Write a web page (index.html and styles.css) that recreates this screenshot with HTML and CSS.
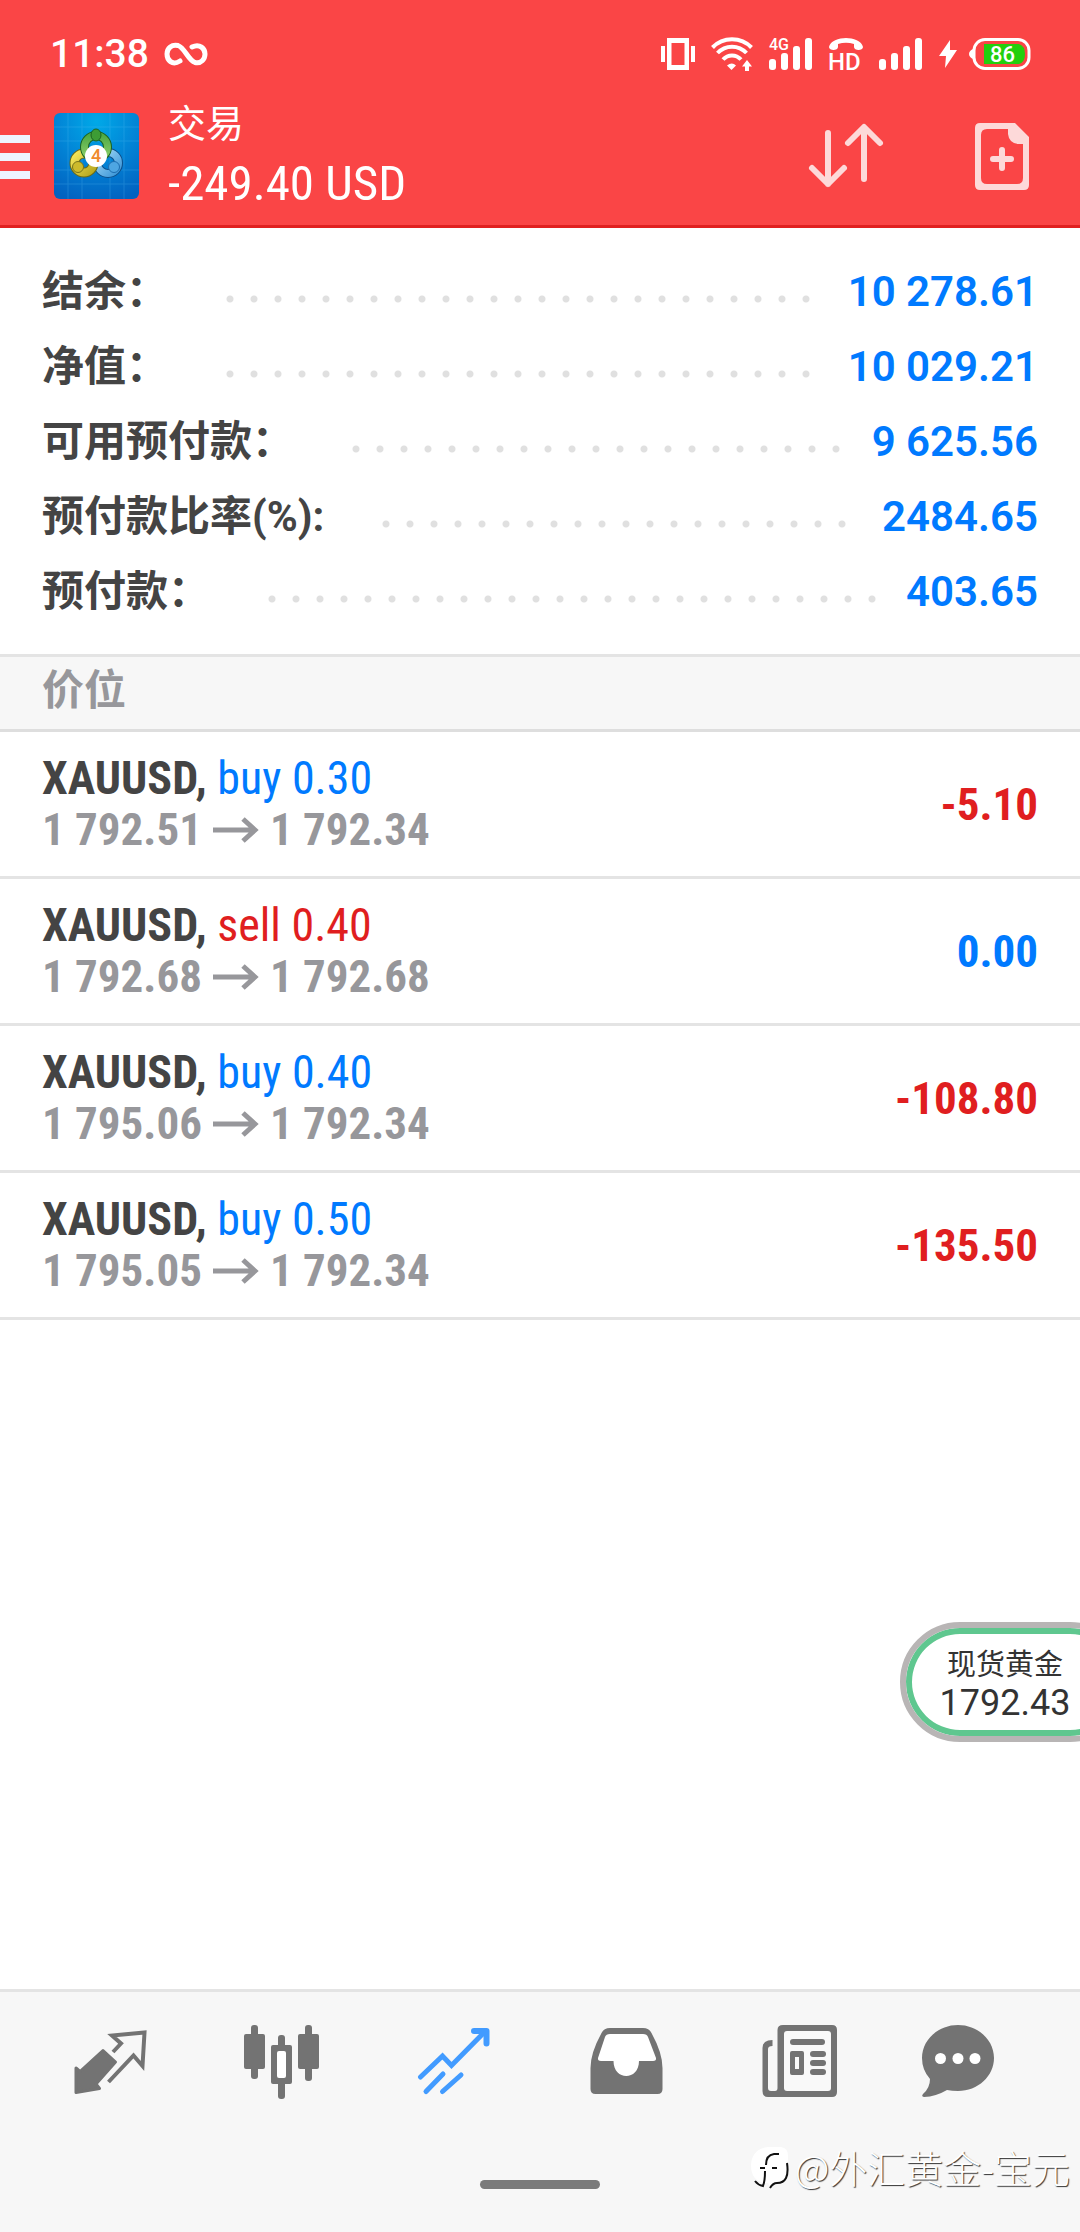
FILE: index.html
```html
<!DOCTYPE html>
<html lang="zh-CN">
<head>
<meta charset="utf-8">
<meta name="viewport" content="width=device-width, initial-scale=1">
<title>交易</title>
<link rel="stylesheet" href="styles.css">
</head>
<body>
<div class="app">
  <header class="top">
    <div class="status">
      <span class="clock">11:38</span>
      <svg class="infinity" width="44" height="24" viewBox="0 0 44 24" fill="none" stroke="#fff" stroke-width="5" stroke-linecap="round"><path d="M16 19C8 24 3 18 3 12S8 2 14 3.500C21 6 24 18 31 20.500C37 22 41 17 41 12S36 1 28 5"/></svg>
      <div class="status-icons">
        <svg width="34" height="32" viewBox="0 0 34 32" fill="#fff"><path d="M6 0h22v32H6zM10.500 5v22h13V5z" fill-rule="evenodd"/><path d="M0 8h4v16H0zM30 8h4v16h-4z"/></svg>
        <svg width="42" height="34" viewBox="0 0 42 34" fill="none" stroke="#fff" stroke-width="4"><path d="M1.500 10.500C12-.5 30-.5 40.500 10.500M6.500 16C14.500 7.500 27.500 7.500 35.500 16M12 22.500c5-5.500 13-5.500 18 0"/><path d="M16 28.500q5-4 9 0L20.500 33z" fill="#fff" stroke="none"/><path d="M31 29.500l5-6.500 5 6.500h-3V34h-4v-4.500z" fill="#fff" stroke="none"/></svg>
        <svg width="44" height="32" viewBox="0 0 44 32" fill="#fff"><rect y="21" width="7" height="11" rx="3"/><rect x="12" y="15" width="7" height="17" rx="3"/><rect x="24" y="8" width="7" height="24" rx="3"/><rect x="36" width="7" height="32" rx="3"/><text class="net" x="0" y="12">4G</text></svg>
        <svg width="34" height="32" viewBox="0 0 34 32" fill="#fff"><path d="M0 9C1 3 10 0 17 0s16 3 17 9c0 4-9 4-9 0V6q-8-2.500-16 0v3c0 4-9 4-9 0z"/><text class="hd" x="-1" y="32">HD</text></svg>
        <svg width="44" height="32" viewBox="0 0 44 32" fill="#fff"><rect y="21" width="7" height="11" rx="3"/><rect x="12" y="15" width="7" height="17" rx="3"/><rect x="24" y="8" width="7" height="24" rx="3"/><rect x="36" width="7" height="32" rx="3"/></svg>
        <div class="power">
          <svg width="18" height="28" viewBox="0 0 18 28" fill="#fff"><path d="M11 0L0 16h7l-1 12L18 10h-7z"/></svg>
          <svg width="62" height="32" viewBox="0 0 62 32"><rect x="5" y="1.500" width="55" height="29" rx="11" fill="none" stroke="#fff" stroke-width="3"/><path d="M4 11v10q-4-2-4-5t4-5z" fill="#fff"/><path d="M15 6h35q6 2 6 10t-6 10H15z" fill="#23cf0c"/><text class="charge" x="21" y="24" fill="#fff">86</text></svg>
        </div>
      </div>
    </div>
    <div class="bar">
      <button class="icon-button" aria-label="菜单"><svg width="30" height="46" viewBox="0 0 30 46" fill="#eef3fe"><path d="M0 2h30v8H0zM0 20h30v8H0zM0 38h30v8H0z"/></svg></button>
      <svg class="logo" width="85" height="86" viewBox="0 0 85 86">
        <defs>
          <radialGradient id="sky" cx=".5" cy=".1" r=".95"><stop offset="0" stop-color="#00a9e8"/><stop offset=".5" stop-color="#0284d6"/><stop offset="1" stop-color="#0262c0"/></radialGradient>
          <linearGradient id="green" x2="0" y2="1"><stop offset="0" stop-color="#4faa45"/><stop offset="1" stop-color="#8fd06b"/></linearGradient>
          <linearGradient id="gold" x2="1" y2="1"><stop offset="0" stop-color="#f4e65a"/><stop offset="1" stop-color="#b8a820"/></linearGradient>
          <linearGradient id="blue" x2="1" y2="1"><stop offset="0" stop-color="#a5dbf8"/><stop offset="1" stop-color="#3c96d8"/></linearGradient>
        </defs>
        <rect width="85" height="86" rx="6" fill="url(#sky)"/>
        <path d="M14 0v86M28 0v86M56 0v86M70 0v86M0 14h85M0 28h85M0 57h85M0 71h85" stroke="#5cc0f5" stroke-width="1" opacity=".25"/>
        <g fill="none">
          <circle cx="54" cy="50" r="10.500" stroke="#0d4f8a" stroke-width="9"/><circle cx="54" cy="50" r="10.500" stroke="url(#blue)" stroke-width="7"/>
          <circle cx="30" cy="50" r="9.500" stroke="#6b6a15" stroke-width="10"/><circle cx="30" cy="50" r="9.500" stroke="url(#gold)" stroke-width="8"/>
          <circle cx="42" cy="34" r="11.500" stroke="#1d6320" stroke-width="9"/><circle cx="42" cy="34" r="11.500" stroke="url(#green)" stroke-width="7"/>
        </g>
        <ellipse cx="42" cy="22" rx="5" ry="6" fill="#3d9c35" stroke="#1d6320"/>
        <circle cx="24" cy="54" r="5.500" fill="#cdbb2c" stroke="#7a7418"/>
        <circle cx="60" cy="54" r="5.500" fill="#4ea6e2" stroke="#1c6db0"/>
        <circle cx="42" cy="43" r="11" fill="#fff"/>
        <text class="four" x="42" y="49" text-anchor="middle">4</text>
      </svg>
      <div class="heading">
        <h1>交易</h1>
        <p>-249.40 USD</p>
      </div>
      <button class="icon-button sort" aria-label="排序"><svg width="74" height="64" viewBox="0 0 74 64" fill="none" stroke="#fdd9d9" stroke-width="6" stroke-linecap="round" stroke-linejoin="round"><path d="M19 9v51M3 44l16 16 16-16M55 55V4M39 19L55 3l16 16"/></svg></button>
      <button class="icon-button" aria-label="新订单"><svg width="54" height="67" viewBox="0 0 54 67"><path d="M5 0h35l14 14v48q0 5-5 5H5q-5 0-5-5V5q0-5 5-5zM12 6q-6 0-6 6v43q0 6 6 6h30q6 0 6-6V21h-5q-9-1-10-10V6z" fill="#fdd9d9" fill-rule="evenodd"/><path d="M27 27v18M18 36h18" stroke="#fdd9d9" stroke-width="6" stroke-linecap="round"/></svg></button>
    </div>
  </header>

  <main class="content">
    <dl class="summary">
      <div class="line"><dt>结余：</dt><dd>10 278.61</dd></div>
      <div class="line"><dt>净值：</dt><dd>10 029.21</dd></div>
      <div class="line"><dt>可用预付款：</dt><dd>9 625.56</dd></div>
      <div class="line"><dt>预付款比率(%):</dt><dd>2484.65</dd></div>
      <div class="line"><dt>预付款：</dt><dd>403.65</dd></div>
    </dl>
    <h2 class="section">价位</h2>
    <ul class="positions">
      <li class="position">
        <div><p class="deal"><b>XAUUSD,</b> <span class="up">buy 0.30</span></p>
        <p class="prices">1 792.51<svg class="arrow" viewBox="0 0 46 26"><path d="M0 13h43M30 2l12 11-12 11"/></svg>1 792.34</p></div>
        <span class="profit down">-5.10</span>
      </li>
      <li class="position">
        <div><p class="deal"><b>XAUUSD,</b> <span class="down">sell 0.40</span></p>
        <p class="prices">1 792.68<svg class="arrow" viewBox="0 0 46 26"><path d="M0 13h43M30 2l12 11-12 11"/></svg>1 792.68</p></div>
        <span class="profit up">0.00</span>
      </li>
      <li class="position">
        <div><p class="deal"><b>XAUUSD,</b> <span class="up">buy 0.40</span></p>
        <p class="prices">1 795.06<svg class="arrow" viewBox="0 0 46 26"><path d="M0 13h43M30 2l12 11-12 11"/></svg>1 792.34</p></div>
        <span class="profit down">-108.80</span>
      </li>
      <li class="position">
        <div><p class="deal"><b>XAUUSD,</b> <span class="up">buy 0.50</span></p>
        <p class="prices">1 795.05<svg class="arrow" viewBox="0 0 46 26"><path d="M0 13h43M30 2l12 11-12 11"/></svg>1 792.34</p></div>
        <span class="profit down">-135.50</span>
      </li>
    </ul>
    <aside class="ticker"><span class="ticker-name">现货黄金</span><span class="ticker-price">1792.43</span></aside>
  </main>

  <footer class="bottom">
    <nav class="tabs">
      <a href="#quotes" aria-label="行情"><svg viewBox="0 0 96 96"><path d="M51 38l8-8.500-9-8L82.500 18.500 80.500 52l-9-10.500-25 26.500" fill="none" stroke="currentColor" stroke-width="4"/><path d="M41 36.500L53.500 48 34 70l3.500 4.500L14 78.500V54l4 3.500z" fill="currentColor" stroke="currentColor" stroke-width="3" stroke-linejoin="round"/></svg></a>
      <a href="#charts" aria-label="图表"><svg viewBox="0 0 96 96" fill="currentColor"><rect x="10" y="20" width="21" height="35" rx="2"/><rect x="17" y="11" width="7" height="54" rx="3"/><rect x="64" y="20" width="21" height="35" rx="2"/><rect x="71" y="11" width="7" height="56" rx="3"/><rect x="37" y="31" width="21" height="39" rx="2"/><rect x="44" y="21" width="7" height="64" rx="3"/><rect x="43" y="37" width="9" height="27" rx="2" fill="#fff"/></svg></a>
      <a class="active" href="#trade" aria-label="交易" aria-current="page"><svg viewBox="0 0 96 96" fill="none" stroke="currentColor" stroke-width="5" stroke-linecap="round"><path d="M14.500 63l22-21 9 9.500L79 17.500"/><path d="M68 17h12.500v12.500" stroke-width="6" stroke-linejoin="round"/><path d="M37 60L20 77.500M55 61L36.500 77.500"/></svg></a>
      <a href="#history" aria-label="历史"><svg viewBox="0 0 96 96"><path d="M32 14h33q6 0 8.500 5 11 20 11 35v21q0 5-5 5H17.500q-5 0-5-5V54q0-15 11-35 2.500-5 8.500-5z" fill="currentColor"/><path d="M32 20h33q4 0 5 3l8 21q.5 3-3 3H61c0 20-25.500 20-25.500 0H23q-3.500 0-3-3l7-21q1-3 5-3z" fill="#fff"/></svg></a>
      <a href="#news" aria-label="新闻"><svg viewBox="0 0 96 96"><path d="M33 11h49q5 0 5 5v62q0 5-5 5H18q-5.500 0-5.500-6V34q0-8 10-8v6q-4.500 0-4.500 3v39q0 3 3 3h4q2.500 0 2.500-3V16q0-5 5.500-5z" fill="currentColor"/><rect x="34" y="17" width="47" height="60" rx="3" fill="#f9f9f9"/><g fill="currentColor"><rect x="40" y="25" width="35" height="6" rx="3"/><path d="M42 37h10q2 0 2 2v20q0 2-2 2H42q-2 0-2-2V39q0-2 2-2zM45 43v12h4V43z" fill-rule="evenodd"/><rect x="60" y="37" width="16" height="6" rx="3"/><rect x="60" y="46" width="16" height="6" rx="3"/><rect x="60" y="55" width="16" height="6" rx="3"/></g></svg></a>
      <a href="#messages" aria-label="消息"><svg viewBox="0 0 96 96"><path d="M36 11c20 0 36 15 36 33S56 77 36 77q-6 0-11-1-11 6.500-23 7-3-.5-1-3 7-6 7-15Q0 56 0 44C0 26 16 11 36 11z" fill="currentColor"/><g fill="#fff"><circle cx="18.500" cy="44.500" r="5.500"/><circle cx="36" cy="44.500" r="5.500"/><circle cx="53" cy="44.500" r="5.500"/></g></svg></a>
    </nav>
    <div class="home"></div>
    <div class="credit"><svg width="40" height="44" viewBox="0 0 40 44"><path d="M18 2h13q8 1 7 11v17q-1 8-11 9l-7 3-2-4Q1 38 1 20 2 4 18 2z" fill="#fff"/><path d="M10 23h5M16 20q0-10 8-11h5M22 23h5M15 26q0 10-2 15-5-1-8-5M37 18q3 20-10 20-4 0-7 5" fill="none" stroke="#111" stroke-width="2"/></svg><span>@外汇黄金-宝元</span></div>
  </footer>
</div>
</body>
</html>
```
FILE: styles.css
```css
* { box-sizing: border-box; }
body, h1, h2, p, ul, dl, dd { margin: 0; padding: 0; }
body {
  font-family: Roboto, "Noto Sans CJK SC", sans-serif;
  color: #444;
  background: #fff;
}
svg { display: block; flex: none; overflow: visible; }

.app {
  position: relative;
  display: flex;
  flex-direction: column;
  min-height: 100vh;
  overflow: hidden;
}

/* header */
.top {
  padding-top: 27px;
  background: #fa4546;
  border-bottom: 3px solid #e02020;
  color: #fff;
}
.status {
  display: flex;
  align-items: center;
  height: 54px;
  padding: 0 49px 0 50px;
}
.clock { font-size: 39px; font-weight: 500; }
.infinity { margin-left: 15px; }
.status-icons {
  display: flex;
  align-items: center;
  gap: 16px;
  margin-left: auto;
}
.power {
  display: flex;
  align-items: center;
  gap: 12px;
}
.net { font-size: 16px; font-weight: 500; }
.hd { font-size: 24px; font-weight: 500; }
.charge { font-size: 22px; font-weight: 500; }

.bar {
  display: flex;
  align-items: center;
  height: 144px;
  padding: 6px 51px 0 0;
}
.icon-button {
  padding: 0;
  border: 0;
  background: none;
}
.logo { margin: 0 29px 0 24px; }
.four { font-size: 18px; font-weight: 500; fill: #f08a2c; }
.heading { flex: 1; }
.heading h1 {
  font-size: 38px;
  font-weight: 400;
  line-height: 56px;
}
.heading p {
  font-family: "Roboto Condensed", Roboto, sans-serif;
  font-size: 49px;
  line-height: 64px;
}
.sort { margin-right: 92px; }

/* account figures */
.content { flex: 1; }
.summary { padding: 26px 42px 25px; }
.line {
  display: flex;
  align-items: baseline;
  height: 75px;
  font-size: 42px;
  font-weight: 700;
  line-height: 75px;
}
.line dt {
  flex: 1;
  display: flex;
  white-space: nowrap;
}
.line dt::after {
  content: "";
  flex: 1;
  height: 8px;
  margin: 41px 26px 0 58px;
  background: radial-gradient(circle at 4px 4px, #e0e0e0 3px, transparent 4px) 0 0 / 24px 8px repeat-x;
}
.line dd { color: #007aff; font-weight: 600; }

.section {
  height: 78px;
  padding: 0 42px;
  border-top: 3px solid #e4e4e4;
  border-bottom: 3px solid #dedede;
  background: #f7f7f7;
  color: #97979b;
  font-size: 42px;
  font-weight: 700;
  line-height: 67px;
}

/* open positions */
.positions { list-style: none; }
.position {
  display: flex;
  align-items: center;
  justify-content: space-between;
  height: 147px;
  padding: 0 42px;
  border-bottom: 3px solid #e4e4e4;
  font-family: "Roboto Condensed", Roboto, sans-serif;
  font-size: 45px;
  line-height: 51px;
}
.deal { font-size: 46px; }
.prices {
  display: flex;
  align-items: center;
  color: #97979b;
  font-weight: 700;
}
.arrow {
  width: 46px;
  height: 26px;
  margin: 0 11px;
  fill: none;
  stroke: currentColor;
  stroke-width: 5;
}
.profit { font-weight: 700; }
.up { color: #007aff; }
.down { color: #e01e20; }

/* floating quote, docked partly outside the right edge */
.ticker {
  position: absolute;
  top: 1622px;
  right: -50px;
  display: flex;
  flex-direction: column;
  align-items: center;
  justify-content: center;
  width: 230px;
  height: 120px;
  padding: 5px 20px 0 0;
  border: 6px solid #b8b5b5;
  border-radius: 60px;
  background: #fff;
  box-shadow: inset 0 0 0 6px #5fc78f;
  color: #333;
}
.ticker-name { font-size: 29px; line-height: 36px; }
.ticker-price { font-size: 36px; line-height: 40px; }

/* tab bar */
.bottom {
  position: relative;
  border-top: 3px solid #e4e4e4;
  background: #f7f7f7;
}
.tabs {
  display: grid;
  grid-template-columns: repeat(6, 1fr);
  justify-items: center;
  padding: 22px 24px 70px;
}
.tabs a { color: #737373; }
.tabs .active { color: #429bff; }
.tabs svg { width: 96px; height: 96px; }
.home {
  width: 120px;
  height: 9px;
  margin: 0 auto 43px;
  border-radius: 5px;
  background: #7b7b7b;
}
.credit {
  position: absolute;
  right: 10px;
  bottom: 37px;
  display: flex;
  align-items: center;
  gap: 5px;
  color: #fff;
  font-family: "Noto Sans CJK SC", sans-serif;
  font-size: 38px;
  font-weight: 300;
  line-height: 56px;
  text-shadow: 1px 1px 1px #333;
}
```
